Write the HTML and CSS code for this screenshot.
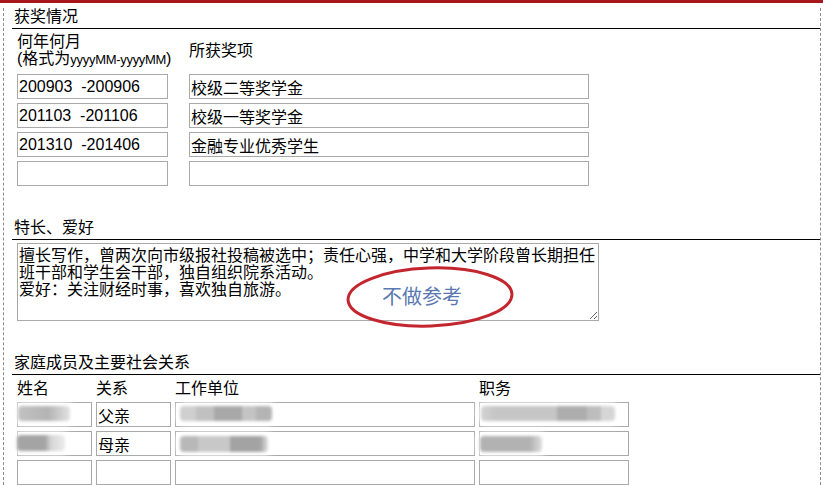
FILE: index.html
```html
<!DOCTYPE html>
<html lang="zh-CN">
<head>
    <meta charset="UTF-8">
    <meta name="viewport" content="width=device-width, initial-scale=1.0">
    <title>个人简历 - 获奖与家庭情况</title>
    <link rel="stylesheet" href="styles.css">
</head>
<body>
    <div class="top-bar"></div>
    <div class="page">

        <div class="section">
            <div class="sec-title">获奖情况</div>
            <div class="award-grid">
                <div class="head">何年何月<br>(格式为<span class="fmt">yyyyMM-yyyyMM</span>)</div>
                <div class="head mid">所获奖项</div>

                <input type="text" value="200903  -200906">
                <input type="text" value="校级二等奖学金">
                <input type="text" value="201103  -201106">
                <input type="text" value="校级一等奖学金">
                <input type="text" value="201310  -201406">
                <input type="text" value="金融专业优秀学生">
                <input type="text" value="">
                <input type="text" value="">
            </div>
        </div>

        <div class="section gap">
            <div class="sec-title">特长、爱好</div>
            <div class="note-wrap">
                <textarea class="note">擅长写作，曾两次向市级报社投稿被选中；责任心强，中学和大学阶段曾长期担任
班干部和学生会干部，独自组织院系活动。
爱好：关注财经时事，喜欢独自旅游。</textarea>
                <div class="stamp">
                    <svg width="172" height="66" viewBox="0 0 172 66">
                        <ellipse cx="86" cy="33" rx="82" ry="29" fill="none" stroke="#c3262e" stroke-width="3" transform="rotate(-2 86 33)"/>
                    </svg>
                    <span class="stamp-text">不做参考</span>
                </div>
            </div>
        </div>

        <div class="section gap">
            <div class="sec-title">家庭成员及主要社会关系</div>
            <div class="family-grid">
                <div class="head">姓名</div>
                <div class="head">关系</div>
                <div class="head">工作单位</div>
                <div class="head">职务</div>

                <div class="cell"><input type="text" value=""><span class="smudge s-name1"></span></div>
                <div class="cell"><input type="text" value="父亲"></div>
                <div class="cell"><input type="text" value=""><span class="smudge s-work1"></span></div>
                <div class="cell"><input type="text" value=""><span class="smudge s-job1"></span></div>

                <div class="cell"><input type="text" value=""><span class="smudge s-name2"></span></div>
                <div class="cell"><input type="text" value="母亲"></div>
                <div class="cell"><input type="text" value=""><span class="smudge s-work2"></span></div>
                <div class="cell"><input type="text" value=""><span class="smudge s-job2"></span></div>

                <div class="cell"><input type="text" value=""></div>
                <div class="cell"><input type="text" value=""></div>
                <div class="cell"><input type="text" value=""></div>
                <div class="cell"><input type="text" value=""></div>
            </div>
        </div>

    </div>
</body>
</html>
```

FILE: styles.css
```css
body {
    margin: 0;
    font-family: "Liberation Sans", "Noto Sans CJK SC", sans-serif;
    font-size: 16px;
    color: #000;
    background-color: #fff;
}

.top-bar {
    height: 3px;
    background-color: #a5171b;
}

.page {
    margin: 0 2px 0 3px;
    border-left: 1px dashed #8c8c8c;
    border-right: 1px dashed #8c8c8c;
    padding-left: 8px;
    min-height: 482px;
}

.section {
    margin-top: 5px;
}

.section.gap {
    margin-top: 33px;
}

.sec-title {
    line-height: 18px;
    padding: 0 0 2px 2px;
    border-bottom: 1px solid #000;
}

input {
    box-sizing: border-box;
    height: 25px;
    margin: 0;
    padding: 0 1px;
    border: 1px solid #a9a9a9;
    font-family: "Liberation Sans", "Noto Sans CJK SC", sans-serif;
    font-size: 16px;
    color: #000;
    background-color: #fff;
    outline: none;
    width: 100%;
}

.head {
    line-height: 18px;
    white-space: nowrap;
}

/* 获奖情况 */
.award-grid {
    display: grid;
    grid-template-columns: 151px 400px;
    column-gap: 21px;
    row-gap: 4px;
    padding: 4px 0 0 5px;
}

.award-grid .head {
    line-height: 17px;
    margin-bottom: 2px;
}

.award-grid .mid {
    align-self: center;
}

.fmt {
    font-size: 13px;
    letter-spacing: -0.3px;
}

/* 特长、爱好 */
.note-wrap {
    position: relative;
    margin: 3px 0 0 5px;
    width: 582px;
}

.note {
    display: block;
    box-sizing: border-box;
    width: 582px;
    height: 78px;
    margin: 0;
    padding: 2px 1px;
    border: 1px solid #a9a9a9;
    font-family: "Noto Sans CJK SC", sans-serif;
    font-size: 16px;
    line-height: 17px;
    color: #000;
    outline: none;
}

.stamp {
    position: absolute;
    left: 327px;
    top: 21px;
    width: 172px;
    height: 66px;
}

.stamp svg {
    display: block;
}

.stamp-text {
    position: absolute;
    left: 38px;
    top: 20px;
    font-family: "Noto Sans CJK SC", sans-serif;
    font-size: 20px;
    line-height: 24px;
    color: #5a78b2;
}

/* 家庭成员 */
.family-grid {
    display: grid;
    grid-template-columns: 75px 75px 300px 150px;
    column-gap: 4px;
    row-gap: 4px;
    padding: 5px 0 0 5px;
}

.cell {
    position: relative;
    height: 25px;
}

.smudge {
    position: absolute;
    filter: blur(1.5px);
    box-shadow: 0 0 6px 4px rgba(255, 255, 255, 0.9);
    border-radius: 4px;
}

.s-name1 {
    left: 1px;
    top: 4px;
    width: 52px;
    height: 15px;
    background: linear-gradient(90deg, #c2c2c2 0, #b3b3b3 30px, #c9c9c9 40px, #e2e2e2 52px);
}

.s-name2 {
    left: 0;
    top: 4px;
    width: 48px;
    height: 16px;
    background: linear-gradient(90deg, #a4a4a4 0, #a4a4a4 28px, #d6d6d6 34px, #ececec 48px);
}

.s-work1 {
    left: 5px;
    top: 4px;
    width: 92px;
    height: 15px;
    background: linear-gradient(90deg, #cfcfcf 0, #cfcfcf 16px, #c0c0c0 16px, #c0c0c0 34px, #a8a8a8 34px, #a8a8a8 62px, #c4c4c4 62px, #c4c4c4 76px, #b4b4b4 76px);
}

.s-work2 {
    left: 5px;
    top: 5px;
    width: 88px;
    height: 16px;
    background: linear-gradient(90deg, #b8b8b8 0, #b8b8b8 18px, #c8c8c8 18px, #c8c8c8 50px, #a3a3a3 50px, #a3a3a3 80px, #e0e0e0 88px);
}

.s-job1 {
    left: 2px;
    top: 4px;
    width: 134px;
    height: 15px;
    background: linear-gradient(90deg, #d2d2d2 0, #c6c6c6 14px, #c6c6c6 76px, #adadad 76px, #adadad 106px, #bdbdbd 106px, #bdbdbd 120px, #d6d6d6 120px);
}

.s-job2 {
    left: 1px;
    top: 5px;
    width: 62px;
    height: 16px;
    background: linear-gradient(90deg, #b2b2b2 0, #b2b2b2 50px, #dedede 62px);
}
```
